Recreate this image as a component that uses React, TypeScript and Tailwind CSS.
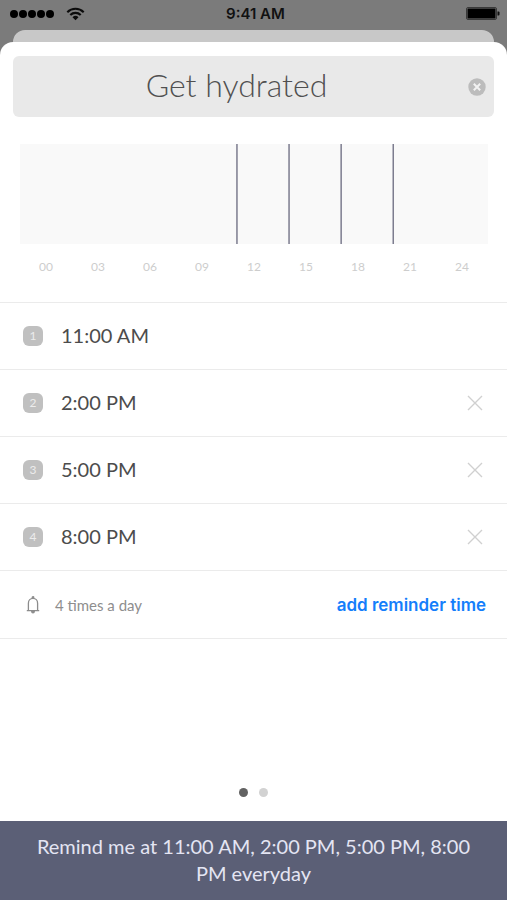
import { useState } from "react";

const HOUR_LABELS = ["00", "03", "06", "09", "12", "15", "18", "21", "24"];

const REMINDERS = [
  { hour: 11, label: "11:00 AM" },
  { hour: 14, label: "2:00 PM" },
  { hour: 17, label: "5:00 PM" },
  { hour: 20, label: "8:00 PM" },
];

function StatusBar() {
  return (
    <header className="relative flex h-7 items-center justify-between pr-[7px] pl-[10px]">
      <div className="flex items-center gap-[12px]">
        <div className="flex gap-px" role="img" aria-label="Signal strength">
          {[0, 1, 2, 3, 4].map((dot) => (
            <span key={dot} className="size-[8px] rounded-full bg-black" />
          ))}
        </div>
        <svg className="h-[14px] w-[19px]" viewBox="0 0 19 14" fill="none" stroke="#0c0c0c" strokeWidth="2.1" aria-hidden="true">
          <path d="M1.3 5.2a11.6 11.6 0 0 1 16.4 0" />
          <path d="M4.3 8.1a7.3 7.3 0 0 1 10.4 0" />
          <path d="M9.5 13.2 6.5 10.2a4.3 4.3 0 0 1 6 0z" fill="#0c0c0c" stroke="none" />
        </svg>
      </div>
      <p className="absolute inset-x-0 pl-1 text-center font-[Inter,sans-serif] text-[15px] leading-4 font-semibold text-[#111111]">
        9:41 AM
      </p>
      <svg className="h-[14px] w-[34px]" viewBox="0 0 34 14" aria-hidden="true">
        <rect x="0.5" y="0.5" width="30" height="12" rx="1.5" fill="none" stroke="#3a3a3a" />
        <rect x="1.5" y="1.5" width="28" height="10" rx="0.5" fill="#000000" />
        <path d="M31.5 4.5h1a1 1 0 0 1 1 1v2a1 1 0 0 1-1 1h-1z" fill="#111111" />
      </svg>
    </header>
  );
}

function DayChart() {
  return (
    <section aria-label="Reminders over the day" className="mt-[27px] pr-[19px] pl-[20px]">
      <svg className="block h-[100px] w-full bg-[#f9f9f9]" viewBox="0 0 468 100" preserveAspectRatio="none" aria-hidden="true">
        {REMINDERS.map(({ hour }) => (
          <rect key={hour} x={216.2 + ((hour - 11) / 3) * 52.1} y="0" width="1.5" height="100" fill="#7d7d8f" />
        ))}
      </svg>
      <ol className="mt-[15px] grid grid-cols-9 text-center text-[12px] leading-4 text-[#cdcdcd]">
        {HOUR_LABELS.map((label) => (
          <li key={label}>{label}</li>
        ))}
      </ol>
    </section>
  );
}

export default function App() {
  const [title, setTitle] = useState("Get hydrated");

  return (
    <div className="flex min-h-screen flex-col bg-[#7b7b7b] font-[Lato,sans-serif]">
      <StatusBar />
      <div className="mx-[13px] mt-[2px] h-3 rounded-t-[12px] bg-[#c8c8c8]" />
      <main className="flex flex-1 flex-col rounded-t-[13px] bg-white">
        <div className="mx-[13px] mt-[14px] flex h-[61px] items-center rounded-[6px] bg-[#e9e9e9] pr-[8px]">
          <input
            aria-label="Reminder title"
            value={title}
            onChange={(event) => setTitle(event.target.value)}
            className="h-[50px] min-w-0 flex-1 bg-transparent pr-[8px] pb-[5px] text-center text-[32px] font-light text-[#505050] outline-none"
          />
          <button type="button" aria-label="Clear title" onClick={() => setTitle("")}>
            <svg className="block size-[18px]" viewBox="0 0 18 18" aria-hidden="true">
              <circle cx="9" cy="9" r="8.7" fill="#bcbcbc" />
              <path d="M5.8 5.8l6.4 6.4M12.2 5.8l-6.4 6.4" stroke="#f2f2f2" strokeWidth="2" />
            </svg>
          </button>
        </div>

        <DayChart />

        <ul className="mt-[27px] border-t border-[#ebebeb]">
          {REMINDERS.map(({ hour, label }, index) => (
            <li key={hour} className="flex h-[67px] items-center border-b border-[#ebebeb] pr-[24px] pl-[23px]">
              <span className="flex size-5 items-center justify-center rounded-[6px] bg-[#c0c0c0] text-[12px] leading-4 text-[#ececec]">
                {index + 1}
              </span>
              <span className="ml-[18px] flex-1 pb-[2px] text-[20px] leading-6 text-[#4c4c4c]">{label}</span>
              {index > 0 && (
                <button type="button" aria-label={`Remove ${label}`}>
                  <svg className="block size-4" viewBox="0 0 16 16" stroke="#d0d0d0" strokeWidth="1.4" aria-hidden="true">
                    <path d="M1 1l14 14M15 1L1 15" />
                  </svg>
                </button>
              )}
            </li>
          ))}
        </ul>

        <div className="flex h-[68px] items-center border-b border-[#ebebeb] pr-[21px] pl-[26px]">
          <svg className="h-[18px] w-[14px]" viewBox="0 0 14 18" fill="none" stroke="#8c8c8c" strokeWidth="1.3" aria-hidden="true">
            <path d="M0.8 14.6h12.4M2.4 14.4V7.2C2.4 4.4 4.4 2.4 7 2.4s4.6 2 4.6 4.8v7.2" />
            <circle cx="7" cy="1.5" r="0.8" fill="#8c8c8c" />
            <path d="M5.7 15.2a1.3 1.6 0 0 0 2.6 0z" fill="#8c8c8c" />
          </svg>
          <p className="ml-[15px] flex-1 text-[15px] leading-5 text-[#8e8e8e]">4 times a day</p>
          <button type="button" className="font-[Inter,sans-serif] text-[17px] leading-6 font-semibold text-[#147efb]">
            add reminder time
          </button>
        </div>

        <nav aria-label="Pages" className="mt-auto mb-[24px] flex justify-center gap-[11px]">
          <button type="button" aria-label="Page 1" aria-current="page" className="size-[9px] rounded-full bg-[#626262]" />
          <button type="button" aria-label="Page 2" className="size-[9px] rounded-full bg-[#d2d2d2]" />
        </nav>
      </main>

      <footer className="bg-[#5b5f76] px-[30px] pt-[12px] pb-[13px] text-center text-[20px] leading-[27px] text-[#e4e5f3]">
        Remind me at 11:00 AM, 2:00 PM, 5:00 PM, 8:00 PM everyday
      </footer>
    </div>
  );
}
